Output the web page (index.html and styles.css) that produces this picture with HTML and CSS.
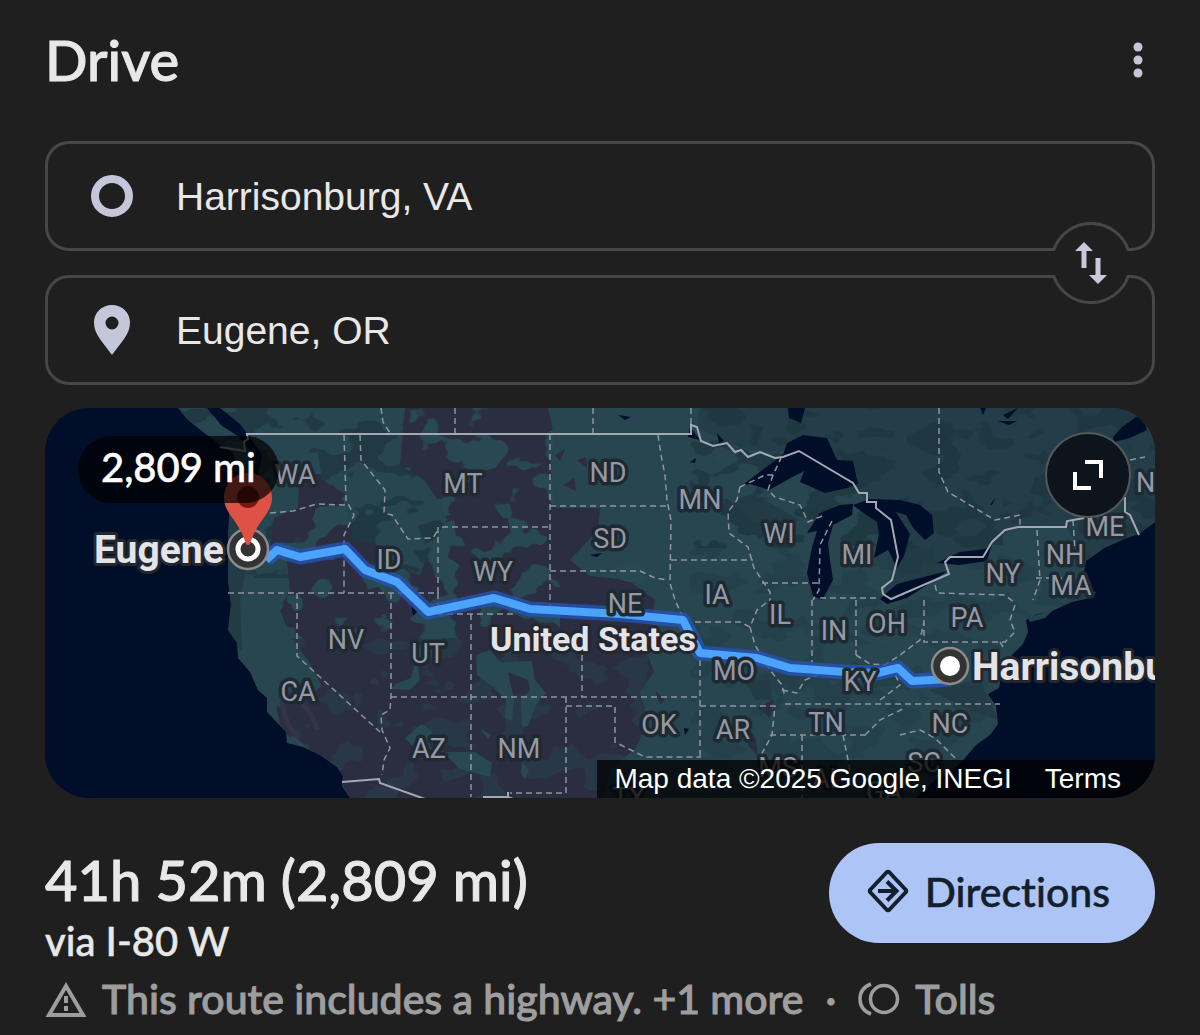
FILE: index.html
```html
<!DOCTYPE html>
<html lang="en">
  <head>
    <meta charset="UTF-8" />
    <meta name="viewport" content="width=device-width, initial-scale=1.0" />
    <title>Drive: Harrisonburg, VA to Eugene, OR</title>
    <link rel="stylesheet" href="styles.css">
  </head>
  <body>
    <header class="header">
      <h1>Drive</h1>
      <button class="menu-btn" type="button" aria-label="More options">
        <svg width="10" height="36" viewBox="0 0 10 36">
          <circle cx="5" cy="5" r="4.5" />
          <circle cx="5" cy="18" r="4.5" />
          <circle cx="5" cy="31" r="4.5" />
        </svg>
      </button>
    </header>

    <form class="stops">
      <div class="stop">
        <svg class="stop-icon" width="44" height="52" viewBox="0 0 44 52">
          <circle cx="22" cy="26" r="17" fill="none" stroke="#c5c6d9" stroke-width="8" />
        </svg>
        <input type="text" aria-label="Starting point" value="Harrisonburg, VA" />
      </div>
      <div class="stop">
        <svg class="stop-icon" width="44" height="52" viewBox="0 0 44 52">
          <path fill="#c5c6d9" fill-rule="evenodd" d="M22 1C11.500 1 4 9 4 18.500C4 31 13 38 22 51C31 38 40 31 40 18.500C40 9 32.500 1 22 1ZM22 12.500a6.500 6.500 0 1 1 0 13a6.500 6.500 0 0 1 0-13Z" />
        </svg>
        <input type="text" aria-label="Destination" value="Eugene, OR" />
      </div>
      <button class="swap-btn" type="button" aria-label="Swap start and destination">
        <svg width="82" height="82" viewBox="0 0 82 82">
          <circle cx="41" cy="41" r="39" fill="#1f1f1f" />
          <path fill="none" stroke="#474747" stroke-width="3" d="M3.500 28.500A39.500 39.500 0 0 1 78.500 28.500M3.500 53.500A39.500 39.500 0 0 0 78.500 53.500" />
          <path fill="#c9c9dc" d="M34 20L43 29H36.500V46H31.500V29H25ZM48 62L39 53H45.500V36H50.500V53H57Z" />
        </svg>
      </button>
    </form>

    <section class="map" aria-label="Route map">
      <svg class="map-canvas" viewBox="45 408 1110 390">
        <defs>
          <path id="land" d="M178 408L188 420L203 432L222 446L232 452L240 470L230 500L228 540L228 580L231 605L228 630L237 643L238 658L250 672L258 690L267 698L267 712L286 732L287 743L303 747L320 755L337 767L343 776L342 786L350 798H915L935 780L950 773L965 758L976 745L990 735L998 724L996 706L988 694L999 688L1003 666L1012 655L1023 644L1028 632L1026 620L1038 614L1052 611L1072 602L1090 598L1096 592L1088 590L1083 576L1086 561L1104 548L1122 540L1140 533L1155 522V408Z" />
          <clipPath id="landClip"><use href="#land" /></clipPath>
          <clipPath id="dryClip">
            <path d="M405 408H548L555 440L550 465L556 508L600 508L598 530L570 560L590 576L628 580L655 600L646 650L654 672L640 692L648 720L636 748L610 770L604 798H350L330 762L310 750L285 728L284 700L305 700L322 686L308 660L292 640L279 608L290 592L287 560L270 545L274 518L298 508L300 455L318 452L322 480L345 494L352 540L378 545L400 568L420 575L432 545L447 520L438 500L424 480L400 465Z" />
          </clipPath>
          <!-- blotchy vegetation, cut out of noise -->
          <filter id="veg" x="0" y="0" width="100%" height="100%" color-interpolation-filters="sRGB">
            <feTurbulence type="fractalNoise" baseFrequency="0.024 0.032" numOctaves="3" seed="8" />
            <feColorMatrix values="0 0 0 0 0.157  0 0 0 0 0.286  0 0 0 0 0.325  30 0 0 0 -16.500" />
          </filter>
          <filter id="forest" x="0" y="0" width="100%" height="100%" color-interpolation-filters="sRGB">
            <feTurbulence type="fractalNoise" baseFrequency="0.026 0.042" numOctaves="3" seed="21" />
            <feColorMatrix values="0 0 0 0 0.118  0 0 0 0 0.212  0 0 0 0 0.251  25 0 0 0 -13.200" />
          </filter>
        </defs>

        <rect x="45" y="408" width="1110" height="390" fill="#000e29" />
        <use href="#land" fill="#284650" />
        <g clip-path="url(#landClip)">
          <path fill="#233e49" d="M700 408H1155V530L1085 560L1066 527L1018 527L992 542L983 557L950 557L945 570L891 599L883 594L898 557L891 520L859 493L799 451L760 452L727 443L697 427Z" />
          <rect x="690" y="408" width="465" height="140" filter="url(#forest)" opacity="0.8" />
          <rect x="690" y="548" width="400" height="250" filter="url(#forest)" opacity="0.3" />
          <rect x="178" y="408" width="300" height="170" filter="url(#forest)" opacity="0.8" />
          <path fill="#233b45" d="M228 505L250 500L252 540L240 600L242 650L228 640ZM738 505L765 500L800 520L780 530L750 520ZM928 690L980 680L998 720L960 705ZM745 680L770 680L772 700L755 700Z" />
          <g clip-path="url(#dryClip)">
            <rect x="260" y="408" width="400" height="390" fill="#2b2d41" />
            <rect x="260" y="408" width="300" height="230" filter="url(#veg)" />
            <rect x="260" y="638" width="400" height="160" filter="url(#veg)" opacity="0.4" />
          </g>
          <path fill="#2b2d41" d="M555 455L565 449L560 461ZM577 460L586 457L587 468ZM563 485L574 478L576 491ZM276 706L291 710L299 725L290 738L280 724ZM758 708L774 699L770 718ZM750 728L756 740L758 757L748 745ZM655 690L665 700L660 704Z" />
          <path fill="#284953" d="M428 620L450 618L441 640L428 642L440 653L418 665L420 680L410 690L390 689L396 684L411 678L416 660ZM476 655L490 650L500 662L532 661L535 680L546 693L536 705L528 726L522 727L521 700L530 690L528 680L508 672L514 700L512 721L505 718L506 700L494 688L477 675ZM405 738L422 724L432 731L430 747L445 752L475 752L492 763L490 777L460 769L449 758L418 752ZM480 728L491 735L488 739ZM522 762L529 770L525 780L521 773ZM495 540L506 550L498 565ZM612 570L630 560L650 570L640 584L620 580Z" />
          <path fill="none" stroke="#34334a" stroke-width="5" d="M282 700Q285 728 300 738M288 694Q310 705 318 730" />
        </g>

        <!-- lakes and inlets -->
        <g fill="#000e29">
          <path d="M207 408H220L240 424L249 436L262 455L258 478L252 470L249 450L238 436L222 426Z" />
          <path d="M740 487L765 468L783 455L787 443L803 435L827 438L837 460L853 461L858 484L847 488L825 493L800 482L804 471L787 480L769 490L760 487L750 484Z" />
          <path d="M807 533L820 513L840 505L853 504L852 515L833 525L828 543L830 560L833 580L822 600L813 596L807 573L812 547L817 531Z" />
          <path d="M853 505L870 499L900 500L920 505L932 515L934 533L925 540L913 528L906 515L896 512L903 523L910 534L904 556L897 568L888 550L874 558L879 534L877 522L862 512Z" />
          <path d="M880 599L897 584L920 578L947 571L930 583L907 598L887 604ZM937 563L960 552L985 549L992 544L987 561L960 565ZM788 408H805L801 423L789 418ZM1113 437L1122 427L1142 413L1147 430L1130 438L1114 442ZM690 427L700 440L688 437ZM690 462L696 458L695 463ZM717 433L724 441L719 443ZM618 415L631 417L625 420ZM590 555L602 553L597 557ZM684 728L689 729L685 735ZM411 602L417 612L413 616ZM980 408H986L983 415ZM1003 415L1018 408L1008 419ZM998 421L1017 421L1009 425ZM990 505L996 497L992 505Z" />
        </g>
        <path fill="#26434d" d="M1028 618L1054 609L1045 618L1030 622Z" />

        <g class="state-lines">
          <path d="M270 513L293 511L317 504L345 505M228 593H439M344 435L346 500L354 515L344 535V593M360 435L361 460L385 490L384 513L392 515L408 539L433 538L438 530M438 593V527H550M550 434V614M550 506H667M550 571H640L655 578L668 580M381 408L383 422L390 433M455 408V434M593 408V434M691 408V425" />
          <path d="M297 593V656L380 732M391 593V697L390 710L381 715L382 730L390 748L384 760L382 775M438 593V614H515M471 614V797M391 697H700M582 655V697M566 697V793H510M566 706H615V742L635 752L645 757H701M700 660V757" />
          <path d="M658 435L661 455L665 475L667 500L671 520L670 583L675 600L684 620M671 560H753M740 487L737 500L728 512L729 533L748 547L754 568L762 580L770 592V600M762 583H820M740 487L765 475L773 475L781 458M773 475L768 490L775 497L800 505L808 522L822 516M832 521L820 545L819 590L813 600M812 600V662M820 598H878M856 600V655M695 622H740L750 627L757 610L770 600M750 627L755 645L770 670L782 685L785 697" />
          <path d="M700 706H775L772 735L760 757M785 704H1000M770 735H870M802 735V798M843 735L850 770M782 690L797 693L805 680L822 673M856 655L870 664L885 665L900 655L920 640L924 622M924 600V642H1005L1015 632L1010 620L1015 605M935 585L937 593L1005 595L1015 603M939 408V472L948 492L995 520L1020 515V525M1037 530L1040 580L1033 600M1073 520L1075 550M880 700L900 685L893 670M865 735L880 720L905 708M900 735L920 730L935 738L957 760M1000 642L1005 650M1130 460L1145 457M1036 578H1075" />
        </g>

        <path class="country-line" d="M220 447L245 451L244 442L248 439L247 434H691V425L697 427L701 441L713 446L727 443L735 452L741 450L748 457L760 452L775 458L783 457L799 451L853 483L859 493H867V502H876V508L891 520L898 557L892 580L882 588L883 594L891 599L949 574L945 562L950 557H983L992 542L1005 530L1018 527H1066L1067 521L1090 517L1108 500L1125 498V512L1130 515L1139 535M342 782L379 779L380 783L425 799M483 797H508L513 799M508 797V792" />

        <g class="route">
          <path stroke="#2552b4" stroke-opacity="0.8" stroke-width="15" d="M266 560L277 550L300 557L345 549L365 570L397 582L428 612L494 598L530 609L620 614L683 620L700 653L757 658L790 668L845 672L877 673L898 668L912 681L950 679" />
          <path stroke="#4ba3fb" stroke-width="8" d="M266 560L277 550L300 557L345 549L365 570L397 582L428 612L494 598L530 609L620 614L683 620L700 653L757 658L790 668L845 672L877 673L898 668L912 681L950 679" />
        </g>

        <g class="state-names">
          <text x="295" y="484">WA</text>
          <text x="463" y="493">MT</text>
          <text x="608" y="482">ND</text>
          <text x="700" y="509">MN</text>
          <text x="779" y="543">WI</text>
          <text x="857" y="564">MI</text>
          <text x="610" y="548">SD</text>
          <text x="389" y="569">ID</text>
          <text x="493" y="581">WY</text>
          <text x="625" y="613">NE</text>
          <text x="717" y="604">IA</text>
          <text x="780" y="624">IL</text>
          <text x="834" y="640">IN</text>
          <text x="887" y="633">OH</text>
          <text x="967" y="627">PA</text>
          <text x="1003" y="583">NY</text>
          <text x="1065" y="564">NH</text>
          <text x="1071" y="595">MA</text>
          <text x="1105" y="536">ME</text>
          <text x="1154" y="492">NB</text>
          <text x="346" y="649">NV</text>
          <text x="428" y="663">UT</text>
          <text x="298" y="701">CA</text>
          <text x="429" y="758">AZ</text>
          <text x="519" y="758">NM</text>
          <text x="659" y="734">OK</text>
          <text x="733" y="739">AR</text>
          <text x="734" y="680">MO</text>
          <text x="860" y="691">KY</text>
          <text x="826" y="732">TN</text>
          <text x="950" y="733">NC</text>
          <text x="924" y="772">SC</text>
          <text x="778" y="777">MS</text>
          <text x="828" y="788">AL</text>
          <text x="884" y="801">GA</text>
          <text x="629" y="807">TX</text>
        </g>

        <g class="place-names">
          <text x="94" y="563">Eugene</text>
          <text x="490" y="651" class="country-name">United States</text>
          <text x="972" y="680">Harrisonburg</text>
        </g>

        <circle cx="950" cy="666" r="18" fill="#333" stroke="#8b8b8d" stroke-width="2.500" />
        <circle cx="950" cy="666" r="10" fill="#fff" />
        <circle cx="248" cy="549" r="20" fill="#333" stroke="#8b8b8d" stroke-width="2.500" />
        <circle cx="248" cy="549" r="10" fill="#333" stroke="#fff" stroke-width="5" />
        <path fill="#de5246" d="M248 473C234 473 224 484 224 498C224 514 239 520 246 544Q248 546 250 544C257 520 272 514 272 498C272 484 262 473 248 473Z" />
        <circle cx="248" cy="497" r="11" fill="#7a150f" />
      </svg>

      <span class="distance">2,809 mi</span>
      <button class="expand-btn" type="button" aria-label="Expand map">
        <svg width="32" height="32" viewBox="0 0 32 32">
          <path fill="none" stroke="#fff" stroke-width="4" d="M13 3H29V19M3 13V29H19" />
        </svg>
      </button>
      <div class="credits">
        <span>Map data ©2025 Google, INEGI</span>
        <a href="#terms">Terms</a>
      </div>
    </section>

    <section class="summary">
      <div class="summary-top">
        <div>
          <h2>41h 52m (2,809 mi)</h2>
          <p class="via">via I-80 W</p>
        </div>
        <button class="directions-btn" type="button">
          <svg width="42" height="46" viewBox="0 0 42 46" fill="none" stroke="#13202c" stroke-width="4">
            <path stroke-linejoin="round" d="M19.500 4.500Q21 3 22.500 4.500L38.500 21.500Q40 23 38.500 24.500L22.500 41.500Q21 43 19.500 41.500L3.500 24.500Q2 23 3.500 21.500Z" />
            <path d="M11 23H29M20 13.500L29.500 23L20 32.500" />
          </svg>
          Directions
        </button>
      </div>
      <p class="notes">
        <svg width="42" height="38" viewBox="0 0 42 38" fill="none" stroke="#9e9e9e" stroke-width="4">
          <path d="M21 6L38 35H4Z" />
          <path d="M21 16V23M21 26V31" />
        </svg>
        <span>This route includes a highway. +1 more</span>
        <span class="dot">·</span>
        <svg width="42" height="34" viewBox="0 0 42 34" fill="none" stroke="#9e9e9e" stroke-width="3.500">
          <circle cx="26" cy="17" r="13.500" />
          <path d="M13 2C5 5 2 10 2 17C2 24 5 29 13 32" />
        </svg>
        <span>Tolls</span>
      </p>
    </section>
  </body>
</html>
```
FILE: styles.css
```css
* {
  box-sizing: border-box;
}
body {
  margin: 0;
  padding: 24px 45px 0;
  background: #1f1f1f;
  color: #e8e8e8;
  font-family: Lato, "Open Sans", sans-serif;
  font-weight: 500;
  font-variant-ligatures: none;
}
h1,
h2,
p {
  margin: 0;
  font-weight: 500;
}
h1,
h2,
.notes {
  -webkit-text-stroke: 1px currentColor;
}
button {
  padding: 0;
  border: none;
  background: none;
  color: inherit;
  font: inherit;
  font-variant-ligatures: none;
  cursor: pointer;
}
svg {
  display: block;
  flex: none;
}
.header {
  display: flex;
  justify-content: space-between;
  align-items: center;
  height: 72px;
}
h1 {
  font-size: 56px;
  line-height: 70px;
}
.menu-btn {
  padding: 12px;
  fill: #c5c6d9;
}
.stops {
  position: relative;
  display: flex;
  flex-direction: column;
  gap: 24px;
  margin: 45px 0 23px;
}
.stop {
  display: flex;
  align-items: center;
  gap: 42px;
  height: 110px;
  padding: 0 42px;
  border: 3px solid #474747;
  border-radius: 24px;
}
.stop input {
  flex: 1;
  min-width: 0;
  padding: 2px 0 0;
  border: none;
  outline: none;
  background: none;
  color: #e8e8e8;
  font: 39px "Liberation Sans", Arial, sans-serif;
}
.swap-btn {
  position: absolute;
  top: 81px;
  right: 23px;
}
.map {
  position: relative;
  overflow: hidden;
  border-radius: 44px;
}
.map-canvas {
  width: 100%;
  height: auto;
  font-family: Roboto, sans-serif;
}
.state-lines {
  fill: none;
  stroke: #8d95a0;
  stroke-width: 1.5;
  stroke-dasharray: 6 4;
}
.country-line {
  fill: none;
  stroke: #a3a8b4;
  stroke-width: 2;
}
.route {
  fill: none;
  stroke-linejoin: round;
}
.state-names {
  fill: #9698a4;
  stroke: #1e2a32;
  stroke-width: 7;
  stroke-linejoin: round;
  paint-order: stroke;
  font-size: 27px;
  font-weight: 400;
  text-anchor: middle;
}
.place-names {
  fill: #e3e4ea;
  stroke: #23272e;
  stroke-width: 6;
  stroke-linejoin: round;
  paint-order: stroke;
  font-size: 39px;
  font-weight: 700;
}
.country-name {
  font-size: 34px;
}
.distance,
.via,
.directions-btn {
  -webkit-text-stroke: 0.5px currentColor;
}
.distance {
  position: absolute;
  top: 28px;
  left: 33px;
  height: 67px;
  padding: 0 23px;
  border-radius: 34px;
  background: rgba(0, 0, 0, 0.7);
  color: #fff;
  font-size: 40px;
  line-height: 62px;
}
.expand-btn {
  position: absolute;
  top: 24px;
  right: 24px;
  display: grid;
  place-items: center;
  width: 86px;
  height: 86px;
  border: 2px solid #55585a;
  border-radius: 50%;
  background: #0c151b;
}
.credits {
  position: absolute;
  right: 0;
  bottom: 0;
  display: flex;
  gap: 33px;
  padding: 0 34px 0 17px;
  background: rgba(0, 0, 0, 0.75);
  color: #fff;
  font: 28px/38px "Liberation Sans", Arial, sans-serif;
}
.credits a {
  color: inherit;
  text-decoration: none;
}
.summary {
  padding-top: 45px;
}
.summary-top {
  display: flex;
  justify-content: space-between;
  align-items: flex-start;
}
h2 {
  font-size: 56px;
  line-height: 74px;
}
.via {
  font-size: 40px;
  line-height: 48px;
}
.directions-btn {
  display: flex;
  align-items: center;
  gap: 16px;
  height: 100px;
  padding: 0 45px 4px 38px;
  border-radius: 50px;
  background: #adc5f6;
  color: #13202c;
  font-size: 41px;
}
.notes {
  display: flex;
  align-items: center;
  gap: 15px;
  height: 68px;
  color: #9e9e9e;
  font-size: 41px;
  line-height: 48px;
  white-space: nowrap;
}
.dot {
  padding: 0 7px;
}
```
